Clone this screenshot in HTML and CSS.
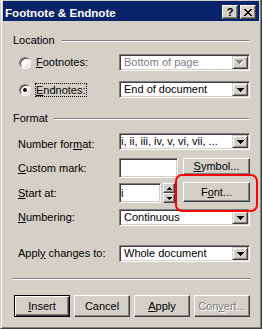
FILE: index.html
```html
<!DOCTYPE html>
<html>
<head>
<meta charset="utf-8">
    <title>Footnote &amp; Endnote</title>
    <link rel="stylesheet" href="styles.css">
</head>
<body>
    <div class="window">
        <div class="titlebar">
            <span class="title">Footnote &amp; Endnote</span>
            <span class="tbtn help">?</span>
            <span class="tbtn close">
                <svg width="8" height="7" viewBox="0 0 8 7"><path d="M0 0h2v1H0z M6 0h2v1H6z M1 1h2v1H1z M5 1h2v1H5z M2 2h4v1H2z M3 3h2v1H3z M2 4h4v1H2z M1 5h2v1H1z M5 5h2v1H5z M0 6h2v1H0z M6 6h2v1H6z"/></svg>
            </span>
        </div>

        <div class="content">
            <div class="group-head"><span>Location</span><div class="etch"></div></div>

            <div class="row radio-row row-foot">
                <span class="radio"></span>
                <span class="lbl"><u>F</u>ootnotes:</span>
                <div class="combo disabled">
                    <span class="val">Bottom of page</span>
                    <span class="arrow"><svg width="8" height="5" viewBox="0 0 8 5"><path class="shade" d="M1 1h7v1H1z M2 2h5v1H2z M3 3h3v1H3z M4 4h1v1H4z"/><path d="M0 0h7v1H0z M1 1h5v1H1z M2 2h3v1H2z M3 3h1v1H3z"/></svg></span>
                </div>
            </div>

            <div class="row radio-row row-end">
                <span class="radio checked"></span>
                <span class="lbl focus"><u>E</u>ndnotes:</span>
                <div class="combo">
                    <span class="val">End of document</span>
                    <span class="arrow"><svg width="7" height="4" viewBox="0 0 7 4"><path d="M0 0h7v1H0z M1 1h5v1H1z M2 2h3v1H2z M3 3h1v1H3z"/></svg></span>
                </div>
            </div>

            <div class="group-head head-format"><span>Format</span><div class="etch"></div></div>

            <div class="row row-numfmt">
                <span class="lbl low">Number for<u>m</u>at:</span>
                <div class="combo">
                    <span class="val tight">i, ii, iii, iv, v, vi, vii, ...</span>
                    <span class="arrow"><svg width="7" height="4" viewBox="0 0 7 4"><path d="M0 0h7v1H0z M1 1h5v1H1z M2 2h3v1H2z M3 3h1v1H3z"/></svg></span>
                </div>
            </div>

            <div class="row row-custom">
                <span class="lbl"><u>C</u>ustom mark:</span>
                <div class="field mark"></div>
                <div class="btn symbol"><span><u>S</u>ymbol...</span></div>
            </div>

            <div class="row row-start">
                <span class="lbl"><u>S</u>tart at:</span>
                <div class="field start"><span class="val tight">i</span></div>
                <div class="spin">
                    <span class="sbtn"><svg width="5" height="3" viewBox="0 0 5 3"><path d="M2 0h1v1H2z M1 1h3v1H1z M0 2h5v1H0z"/></svg></span>
                    <span class="sbtn"><svg width="5" height="3" viewBox="0 0 5 3"><path d="M0 0h5v1H0z M1 1h3v1H1z M2 2h1v1H2z"/></svg></span>
                </div>
                <div class="btn font"><span>F<u>o</u>nt...</span></div>
            </div>

            <div class="row row-numbering">
                <span class="lbl"><u>N</u>umbering:</span>
                <div class="combo">
                    <span class="val">Continuous</span>
                    <span class="arrow"><svg width="7" height="4" viewBox="0 0 7 4"><path d="M0 0h7v1H0z M1 1h5v1H1z M2 2h3v1H2z M3 3h1v1H3z"/></svg></span>
                </div>
            </div>

            <div class="row row-apply">
                <span class="lbl">Appl<u>y</u> changes to:</span>
                <div class="combo">
                    <span class="val">Whole document</span>
                    <span class="arrow"><svg width="7" height="4" viewBox="0 0 7 4"><path d="M0 0h7v1H0z M1 1h5v1H1z M2 2h3v1H2z M3 3h1v1H3z"/></svg></span>
                </div>
            </div>

            <div class="sep"></div>

            <div class="buttons">
                <div class="btn push default"><span><u>I</u>nsert</span></div>
                <div class="btn push"><span>Cancel</span></div>
                <div class="btn push"><span><u>A</u>pply</span></div>
                <div class="btn push off"><span>Con<u>v</u>ert...</span></div>
            </div>
        </div>

        <div class="highlight"></div>
    </div>
</body>
</html>
```

FILE: styles.css
```css
* {
    box-sizing: border-box;
}
body {
    margin: 0;
    background: #d4d0c8;
    font-family: "Liberation Sans", Arial, sans-serif;
    font-size: 11px;
    color: #000;
}
u {
    text-underline-offset: 1px;
}
.window {
    position: relative;
    width: 262px;
    height: 329px;
    padding: 1px 2px 2px;
    background: #d4d0c8;
    border: 1px solid #404040;
    border-top: 0;
    border-left-color: #d4d0c8;
    box-shadow: inset 1px 0 #fff, inset -1px -1px #808080;
}

/* title bar */
.titlebar {
    display: flex;
    align-items: flex-start;
    height: 20px;
    background: #0a246a;
    color: #fff;
}
.title {
    padding: 3px 0 0 2px;
    font-size: 11.6px;
    font-weight: bold;
    line-height: 17px;
}
.tbtn {
    display: flex;
    align-items: center;
    justify-content: center;
    width: 16px;
    height: 14px;
    margin-top: 4px;
    background: #d4d0c8;
    color: #000;
    border: 1px solid;
    border-color: #fff #404040 #404040 #fff;
    box-shadow: inset -1px -1px #808080;
}
.help {
    margin-left: auto;
    margin-right: 2px;
    font-weight: bold;
    font-size: 11px;
    line-height: 12px;
}
.close {
    margin-right: 3px;
}
.close svg {
    shape-rendering: crispEdges;
}

.content {
    padding: 0 9px 0 10px;
}

/* group headings */
.group-head {
    display: flex;
    align-items: center;
    gap: 7px;
    height: 13px;
    margin-top: 13px;
    line-height: 13px;
}
.head-format {
    margin-top: 14px;
    gap: 6px;
}
.etch {
    flex: 1;
    height: 2px;
    margin-right: 1px;
    border-top: 1px solid #808080;
    border-bottom: 1px solid #fff;
}

/* rows */
.row {
    display: flex;
    align-items: center;
    height: 17px;
    padding-left: 5px;
    line-height: 13px;
}
.radio-row {
    padding-left: 6px;
}
.row-foot {
    margin-top: 7px;
}
.row-end {
    margin-top: 10px;
}
.row-numfmt {
    margin-top: 8px;
}
.row-custom {
    height: 20px;
    margin-top: 8px;
}
.row-start {
    height: 20px;
    margin-top: 5px;
}
.row-numbering {
    margin-top: 6px;
}
.row-apply {
    margin-top: 19px;
}
.lbl.low {
    padding-top: 5px;
}

.radio {
    position: relative;
    width: 12px;
    height: 12px;
    margin-right: 5px;
    border-radius: 50%;
    background: #fff;
    border: 1px solid;
    border-color: #808080 #fff #fff #808080;
    box-shadow: inset 1px 1px #404040, inset -1px -1px #d4d0c8;
}
.radio.checked::after {
    content: "";
    position: absolute;
    left: 3px;
    top: 3px;
    width: 4px;
    height: 4px;
    border-radius: 50%;
    background: #000;
}
.focus {
    margin-left: -1px;
    border: 1px dotted #000;
    line-height: 12px;
}

/* combo boxes and fields */
.combo, .field {
    display: flex;
    align-items: center;
    background: #fff;
    padding: 1px;
    border: 1px solid;
    border-color: #808080 #fff #fff #808080;
    box-shadow: inset 1px 1px #404040, inset -1px -1px #d4d0c8;
}
.combo {
    width: 131px;
    height: 17px;
    margin-left: auto;
}
.val {
    flex: 1;
    padding-left: 3px;
    white-space: nowrap;
    overflow: hidden;
}
.val.tight {
    padding-left: 0;
}
.disabled .val {
    color: #808080;
}
.arrow {
    display: flex;
    align-items: center;
    justify-content: center;
    width: 16px;
    height: 13px;
    background: #d4d0c8;
    border: 1px solid;
    border-color: #d4d0c8 #404040 #404040 #d4d0c8;
    box-shadow: inset 1px 1px #fff, inset -1px -1px #808080;
}
.arrow svg, .sbtn svg {
    shape-rendering: crispEdges;
}
.disabled .arrow path {
    fill: #808080;
}
.disabled .arrow path.shade {
    fill: #fff;
}
.mark {
    width: 59px;
    height: 20px;
    margin-left: auto;
}
.start {
    width: 42px;
    height: 20px;
    margin-left: auto;
}
.spin {
    display: flex;
    flex-direction: column;
    width: 12px;
    height: 20px;
    margin-left: 2px;
}
.sbtn {
    display: flex;
    align-items: center;
    justify-content: center;
    height: 10px;
    background: #d4d0c8;
    border: 1px solid;
    border-color: #fff #404040 #404040 #fff;
    box-shadow: inset -1px -1px #808080;
}

/* buttons */
.btn {
    display: flex;
    align-items: center;
    justify-content: center;
    background: #d4d0c8;
    border: 1px solid;
    border-color: #fff #404040 #404040 #fff;
    box-shadow: inset -1px -1px #808080;
}
.symbol {
    align-self: flex-start;
    width: 67px;
    height: 17px;
    margin-left: 5px;
}
.font {
    align-self: flex-start;
    width: 67px;
    height: 20px;
    margin-top: -1px;
    margin-left: 8px;
}
.sep {
    height: 2px;
    margin-top: 16px;
    border-top: 1px solid #808080;
    border-bottom: 1px solid #fff;
}
.buttons {
    display: flex;
    gap: 4px;
    margin-top: 15px;
    padding-left: 1px;
}
.push {
    width: 56px;
    height: 22px;
}
.push.default {
    border-color: #000;
    box-shadow: inset 1px 1px #fff, inset -1px -1px #404040, inset -2px -2px #808080;
}
.push.off {
    color: #808080;
    text-shadow: 1px 1px #fff;
}

/* red marker drawn over the Font button */
.highlight {
    position: absolute;
    left: 174px;
    top: 174px;
    width: 83px;
    height: 38px;
    border: 2px solid #f00;
    border-radius: 7px;
}
```
